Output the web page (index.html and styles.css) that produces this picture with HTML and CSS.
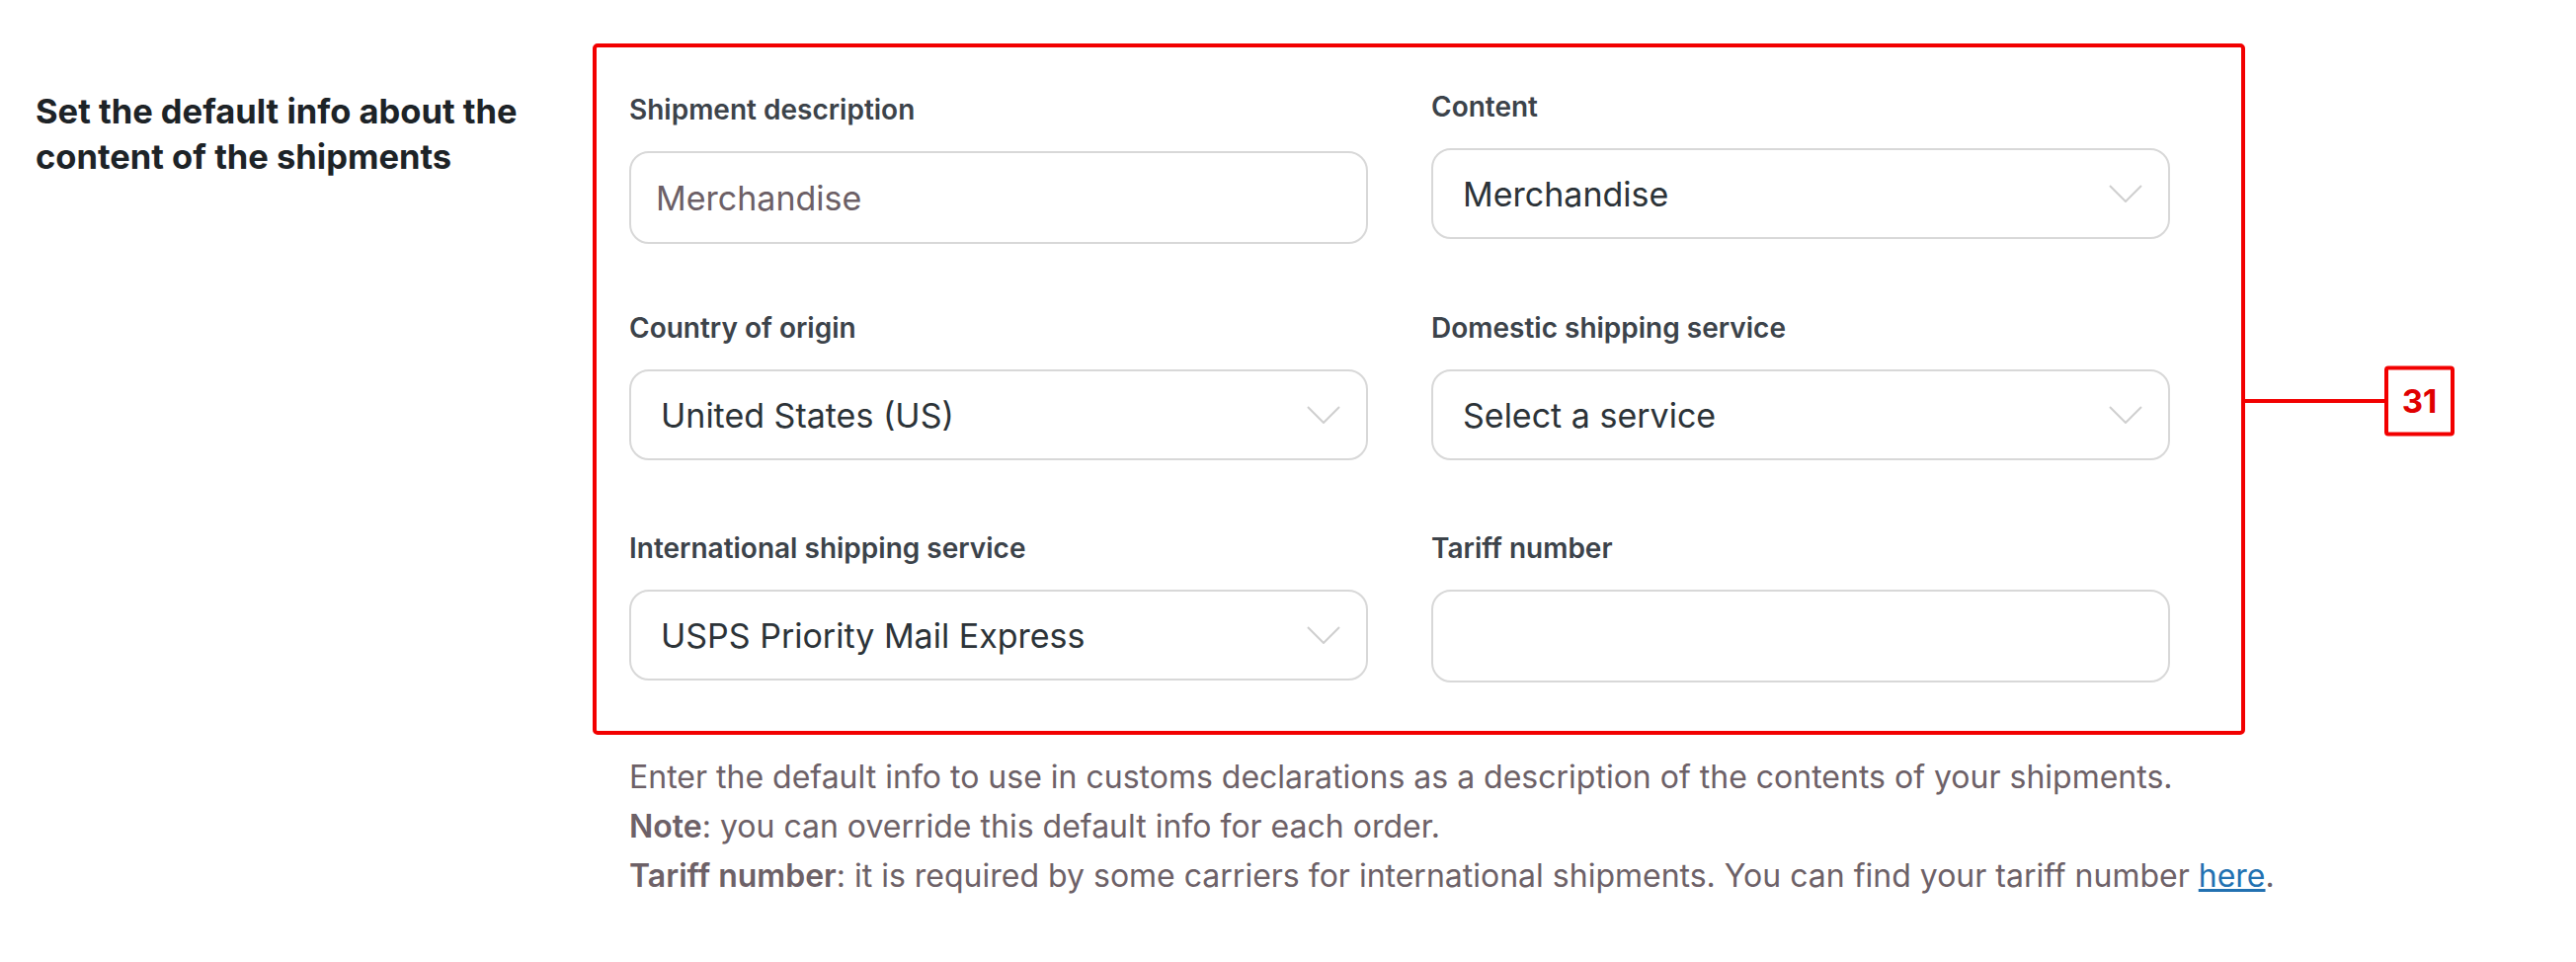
FILE: index.html
```html
<!DOCTYPE html>
<html lang="en">
<head>
    <meta charset="UTF-8">
    <title>Shipment content defaults</title>
    <link rel="stylesheet" href="styles.css">
</head>
<body>
    <div class="setting-row">
        <h2 class="setting-title">Set the default info about the content of the shipments</h2>
        <div class="setting-body">
            <div class="callout">
                <div class="fields">
                    <div class="field">
                        <label class="field-label">Shipment description</label>
                        <input type="text" class="text-input" value="Merchandise">
                    </div>
                    <div class="field field-raised">
                        <label class="field-label">Content</label>
                        <div class="select-box">
                            <span>Merchandise</span>
                            <svg class="chevron" width="34" height="18" viewBox="0 0 34 18"><polyline points="1,1 17,17 33,1" fill="none" stroke="#cfcfcf" stroke-width="2"/></svg>
                        </div>
                    </div>
                    <div class="field">
                        <label class="field-label">Country of origin</label>
                        <div class="select-box">
                            <span>United States (US)</span>
                            <svg class="chevron" width="34" height="18" viewBox="0 0 34 18"><polyline points="1,1 17,17 33,1" fill="none" stroke="#cfcfcf" stroke-width="2"/></svg>
                        </div>
                    </div>
                    <div class="field">
                        <label class="field-label">Domestic shipping service</label>
                        <div class="select-box">
                            <span>Select a service</span>
                            <svg class="chevron" width="34" height="18" viewBox="0 0 34 18"><polyline points="1,1 17,17 33,1" fill="none" stroke="#cfcfcf" stroke-width="2"/></svg>
                        </div>
                    </div>
                    <div class="field field-lowered">
                        <label class="field-label">International shipping service</label>
                        <div class="select-box">
                            <span>USPS Priority Mail Express</span>
                            <svg class="chevron" width="34" height="18" viewBox="0 0 34 18"><polyline points="1,1 17,17 33,1" fill="none" stroke="#cfcfcf" stroke-width="2"/></svg>
                        </div>
                    </div>
                    <div class="field field-lowered">
                        <label class="field-label">Tariff number</label>
                        <input type="text" class="text-input" value="">
                    </div>
                </div>
                <div class="marker-line"></div>
                <div class="marker">31</div>
            </div>
            <p class="description">
                Enter the default info to use in customs declarations as a description of the contents of your shipments.<br>
                <strong>Note</strong>: you can override this default info for each order.<br>
                <strong>Tariff number</strong>: it is required by some carriers for international shipments. You can find your tariff number <a href="#">here</a>.
            </p>
        </div>
    </div>
</body>
</html>
```

FILE: styles.css
```css
body {
    margin: 0;
    background: #fff;
    font-family: Inter, "Noto Sans", sans-serif;
}
.setting-row {
    display: flex;
    padding: 44px 0 0 36px;
}
.setting-title {
    width: 524px;
    margin: 0 40px 0 0;
    padding-top: 46px;
    font-size: 34.5px;
    line-height: 46px;
    font-weight: 700;
    color: #1d2327;
}
.callout {
    position: relative;
    width: 1673px;
    box-sizing: border-box;
    border: 4px solid #f20000;
    border-radius: 5px;
    padding: 45px 72px 49px 33px;
}
.fields {
    display: grid;
    grid-template-columns: 748px 748px;
    column-gap: 64px;
    row-gap: 67px;
}
.field-raised {
    margin-top: -3px;
}
.field-lowered {
    margin-top: 4px;
}
.field-label {
    display: block;
    font-size: 28px;
    line-height: 36px;
    font-weight: 600;
    color: #3c434a;
    margin-bottom: 24px;
}
.text-input {
    display: block;
    width: 100%;
    height: 94px;
    box-sizing: border-box;
    border: 2px solid #d8d8d8;
    border-radius: 20px;
    padding: 0 25px;
    font-family: Inter, "Noto Sans", sans-serif;
    font-size: 34px;
    color: #6c5f66;
    background: #fff;
    outline: none;
}
.select-box {
    display: flex;
    align-items: center;
    justify-content: space-between;
    height: 92px;
    box-sizing: border-box;
    border: 2px solid #d8d8d8;
    border-radius: 20px;
    padding: 0 26px 0 30px;
    font-size: 34px;
    color: #2c3338;
}
.chevron {
    display: block;
}
.marker-line {
    position: absolute;
    left: 100%;
    top: calc(50% + 12px);
    width: 145px;
    height: 4px;
    margin-top: -2px;
    background: #f20000;
}
.marker {
    position: absolute;
    left: calc(100% + 145px);
    top: calc(50% + 12px);
    transform: translateY(-50%);
    width: 71px;
    height: 71px;
    box-sizing: border-box;
    border: 4px solid #f20000;
    border-radius: 4px;
    background: #fff;
    color: #e00000;
    font-size: 33px;
    font-weight: 700;
    line-height: 63px;
    text-align: center;
}
.description {
    margin: 18px 0 0 37px;
    font-size: 32px;
    line-height: 50px;
    color: #6d6167;
}
.description strong {
    font-weight: 600;
}
.description a {
    color: #2271b1;
}
```
